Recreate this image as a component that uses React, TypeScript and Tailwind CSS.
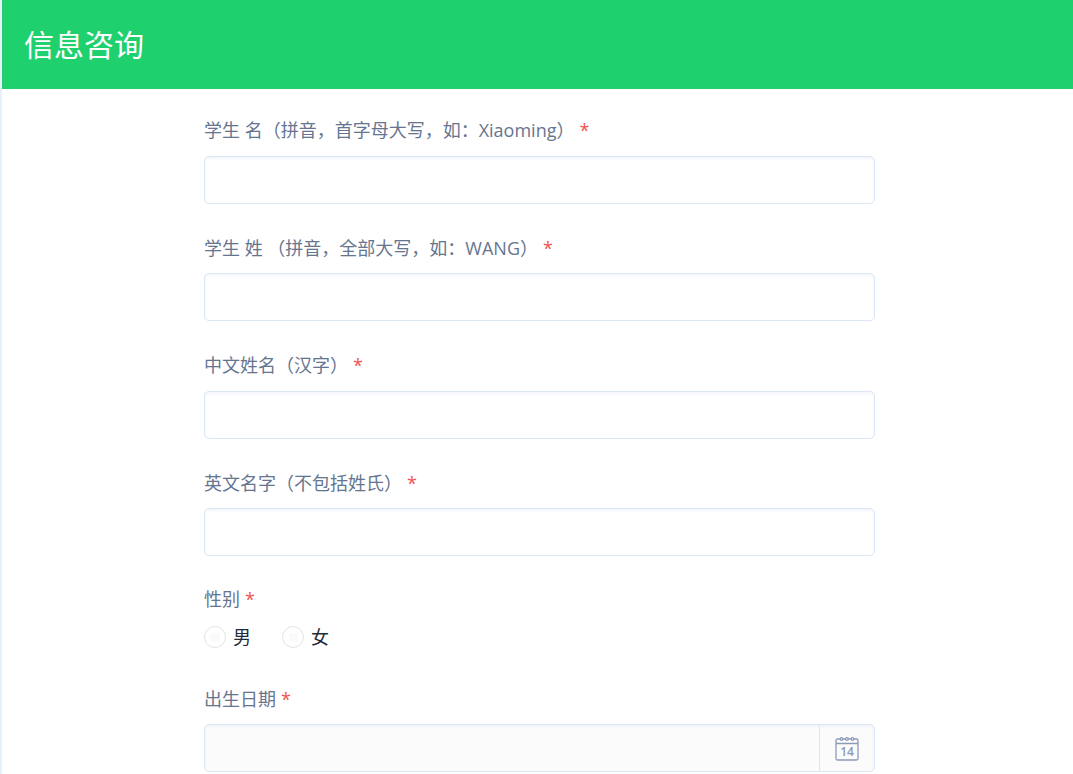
import * as React from 'react'

const font = `"Open Sans", "Noto Sans CJK SC", sans-serif`

function Star() {
  return <span className="text-[#ef5350]">*</span>
}

function TextField({ label, last }: { label: string; last?: boolean }) {
  return (
    <div className={last ? 'mb-[29.5px]' : 'mb-[31px]'}>
      <label className="flex h-[27px] items-center text-[18px] leading-[27px] text-[#66758f] whitespace-pre">
        {label}
        <span className="ml-[5px]">
          <Star />
        </span>
      </label>
      <input
        type="text"
        className="mt-[11.5px] block h-12 w-full rounded-[5px] border border-[#dbe6f6] bg-white shadow-[inset_0_2px_3px_rgba(230,236,245,0.45)] outline-none"
      />
    </div>
  )
}

function Radio({ label }: { label: string }) {
  return (
    <label className="flex items-center gap-[7px] text-[18px] text-[#1f2a3a]">
      <span className="flex h-[22px] w-[22px] items-center justify-center rounded-full border border-[#e4e4e4] bg-white">
        <span className="h-[9px] w-[9px] rounded-[2px] bg-[#fafafa]" />
      </span>
      {label}
    </label>
  )
}

function CalendarIcon() {
  return (
    <svg width="26" height="26" viewBox="0 0 26 26" fill="none" stroke="#8c9ab8" strokeWidth="1.3">
      <rect x="2" y="4" width="22" height="21" rx="1.5" />
      <path d="M2 8.5h22" />
      <circle cx="7.5" cy="4" r="1.3" fill="#fff" />
      <circle cx="13" cy="4" r="1.3" fill="#fff" />
      <circle cx="18.5" cy="4" r="1.3" fill="#fff" />
      <text x="13" y="21" textAnchor="middle" fontSize="12" fontWeight="600" fill="#8c9ab8" stroke="none" fontFamily="Open Sans, sans-serif">
        14
      </text>
    </svg>
  )
}

export default function App() {
  return (
    <div className="h-[774px] overflow-hidden border-l-2 border-[#e8f0fb] bg-white" style={{ fontFamily: font }}>
      <header className="flex h-[89px] items-center bg-[#1fd06e] pl-[22px] text-[30px] text-white">
        信息咨询
      </header>

      <form className="ml-[202px] w-[671px] pt-[28.4px]">
        <TextField label="学生 名（拼音，首字母大写，如：Xiaoming）" />
        <TextField label="学生 姓 （拼音，全部大写，如：WANG）" />
        <TextField label="中文姓名（汉字）" />
        <TextField label="英文名字（不包括姓氏）" last />

        <div>
          <label className="flex h-[27px] items-center gap-[5px] text-[18px] text-[#66758f]">
            性别 <Star />
          </label>
          <div className="mt-[11px] flex gap-[31px]">
            <Radio label="男" />
            <Radio label="女" />
          </div>
        </div>

        <div className="mt-[35.5px]">
          <label className="flex h-[27px] items-center gap-[5px] text-[18px] text-[#66758f]">
            出生日期 <Star />
          </label>
          <div className="mt-[11px] flex h-12 overflow-hidden rounded-[5px] border border-[#dbe6f6] bg-[#fbfbfb] shadow-[inset_0_2px_3px_rgba(230,236,245,0.45)]">
            <input type="text" disabled className="min-w-0 flex-1 bg-transparent" />
            <div className="flex w-[55px] items-center justify-center border-l border-[#dbe6f6]">
              <CalendarIcon />
            </div>
          </div>
        </div>
      </form>
    </div>
  )
}
